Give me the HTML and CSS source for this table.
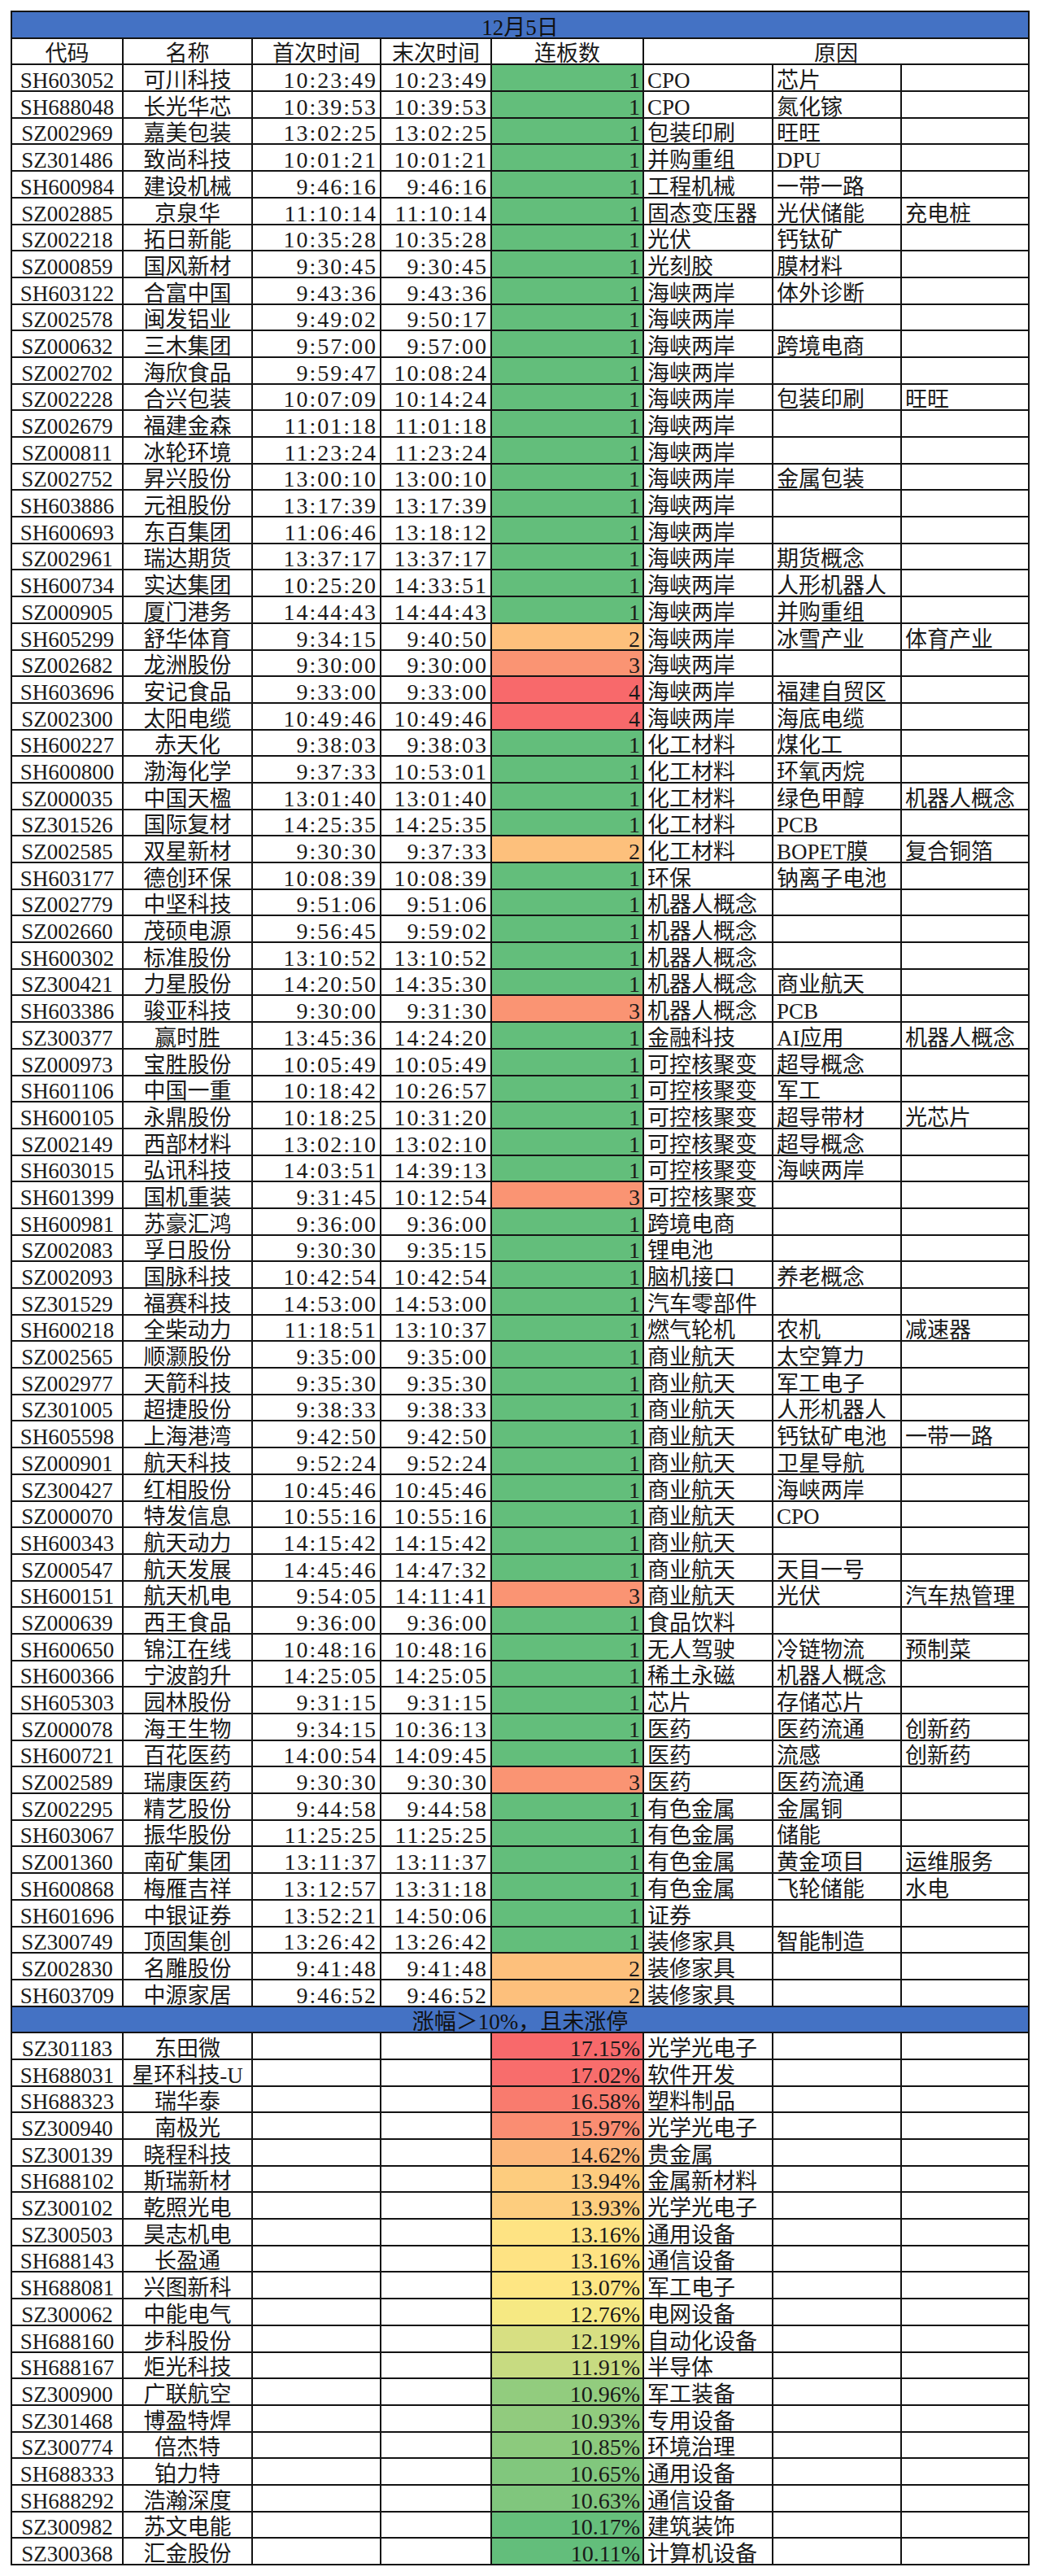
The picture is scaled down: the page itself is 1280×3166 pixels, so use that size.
FILE: index.html
```html
<!DOCTYPE html>
<html lang="zh-CN">
<head>
<meta charset="utf-8">
<title>12月5日</title>
<link rel="stylesheet" href="styles.css">
</head>
<body>
<div class="sheet">
<div class="band">12月5日</div>
<div class="r hd"><div>代码</div><div>名称</div><div>首次时间</div><div>末次时间</div><div>连板数</div><div class="why">原因</div></div>
<div class="r"><div>SH603052</div><div>可川科技</div><div>10:23:49</div><div>10:23:49</div><div class="v1">1</div><div>CPO</div><div>芯片</div><div></div></div>
<div class="r"><div>SH688048</div><div>长光华芯</div><div>10:39:53</div><div>10:39:53</div><div class="v1">1</div><div>CPO</div><div>氮化镓</div><div></div></div>
<div class="r"><div>SZ002969</div><div>嘉美包装</div><div>13:02:25</div><div>13:02:25</div><div class="v1">1</div><div>包装印刷</div><div>旺旺</div><div></div></div>
<div class="r"><div>SZ301486</div><div>致尚科技</div><div>10:01:21</div><div>10:01:21</div><div class="v1">1</div><div>并购重组</div><div>DPU</div><div></div></div>
<div class="r"><div>SH600984</div><div>建设机械</div><div>9:46:16</div><div>9:46:16</div><div class="v1">1</div><div>工程机械</div><div>一带一路</div><div></div></div>
<div class="r"><div>SZ002885</div><div>京泉华</div><div>11:10:14</div><div>11:10:14</div><div class="v1">1</div><div>固态变压器</div><div>光伏储能</div><div>充电桩</div></div>
<div class="r"><div>SZ002218</div><div>拓日新能</div><div>10:35:28</div><div>10:35:28</div><div class="v1">1</div><div>光伏</div><div>钙钛矿</div><div></div></div>
<div class="r"><div>SZ000859</div><div>国风新材</div><div>9:30:45</div><div>9:30:45</div><div class="v1">1</div><div>光刻胶</div><div>膜材料</div><div></div></div>
<div class="r"><div>SH603122</div><div>合富中国</div><div>9:43:36</div><div>9:43:36</div><div class="v1">1</div><div>海峡两岸</div><div>体外诊断</div><div></div></div>
<div class="r"><div>SZ002578</div><div>闽发铝业</div><div>9:49:02</div><div>9:50:17</div><div class="v1">1</div><div>海峡两岸</div><div></div><div></div></div>
<div class="r"><div>SZ000632</div><div>三木集团</div><div>9:57:00</div><div>9:57:00</div><div class="v1">1</div><div>海峡两岸</div><div>跨境电商</div><div></div></div>
<div class="r"><div>SZ002702</div><div>海欣食品</div><div>9:59:47</div><div>10:08:24</div><div class="v1">1</div><div>海峡两岸</div><div></div><div></div></div>
<div class="r"><div>SZ002228</div><div>合兴包装</div><div>10:07:09</div><div>10:14:24</div><div class="v1">1</div><div>海峡两岸</div><div>包装印刷</div><div>旺旺</div></div>
<div class="r"><div>SZ002679</div><div>福建金森</div><div>11:01:18</div><div>11:01:18</div><div class="v1">1</div><div>海峡两岸</div><div></div><div></div></div>
<div class="r"><div>SZ000811</div><div>冰轮环境</div><div>11:23:24</div><div>11:23:24</div><div class="v1">1</div><div>海峡两岸</div><div></div><div></div></div>
<div class="r"><div>SZ002752</div><div>昇兴股份</div><div>13:00:10</div><div>13:00:10</div><div class="v1">1</div><div>海峡两岸</div><div>金属包装</div><div></div></div>
<div class="r"><div>SH603886</div><div>元祖股份</div><div>13:17:39</div><div>13:17:39</div><div class="v1">1</div><div>海峡两岸</div><div></div><div></div></div>
<div class="r"><div>SH600693</div><div>东百集团</div><div>11:06:46</div><div>13:18:12</div><div class="v1">1</div><div>海峡两岸</div><div></div><div></div></div>
<div class="r"><div>SZ002961</div><div>瑞达期货</div><div>13:37:17</div><div>13:37:17</div><div class="v1">1</div><div>海峡两岸</div><div>期货概念</div><div></div></div>
<div class="r"><div>SH600734</div><div>实达集团</div><div>10:25:20</div><div>14:33:51</div><div class="v1">1</div><div>海峡两岸</div><div>人形机器人</div><div></div></div>
<div class="r"><div>SZ000905</div><div>厦门港务</div><div>14:44:43</div><div>14:44:43</div><div class="v1">1</div><div>海峡两岸</div><div>并购重组</div><div></div></div>
<div class="r"><div>SH605299</div><div>舒华体育</div><div>9:34:15</div><div>9:40:50</div><div class="v2">2</div><div>海峡两岸</div><div>冰雪产业</div><div>体育产业</div></div>
<div class="r"><div>SZ002682</div><div>龙洲股份</div><div>9:30:00</div><div>9:30:00</div><div class="v3">3</div><div>海峡两岸</div><div></div><div></div></div>
<div class="r"><div>SH603696</div><div>安记食品</div><div>9:33:00</div><div>9:33:00</div><div class="v4">4</div><div>海峡两岸</div><div>福建自贸区</div><div></div></div>
<div class="r"><div>SZ002300</div><div>太阳电缆</div><div>10:49:46</div><div>10:49:46</div><div class="v4">4</div><div>海峡两岸</div><div>海底电缆</div><div></div></div>
<div class="r"><div>SH600227</div><div>赤天化</div><div>9:38:03</div><div>9:38:03</div><div class="v1">1</div><div>化工材料</div><div>煤化工</div><div></div></div>
<div class="r"><div>SH600800</div><div>渤海化学</div><div>9:37:33</div><div>10:53:01</div><div class="v1">1</div><div>化工材料</div><div>环氧丙烷</div><div></div></div>
<div class="r"><div>SZ000035</div><div>中国天楹</div><div>13:01:40</div><div>13:01:40</div><div class="v1">1</div><div>化工材料</div><div>绿色甲醇</div><div>机器人概念</div></div>
<div class="r"><div>SZ301526</div><div>国际复材</div><div>14:25:35</div><div>14:25:35</div><div class="v1">1</div><div>化工材料</div><div>PCB</div><div></div></div>
<div class="r"><div>SZ002585</div><div>双星新材</div><div>9:30:30</div><div>9:37:33</div><div class="v2">2</div><div>化工材料</div><div>BOPET膜</div><div>复合铜箔</div></div>
<div class="r"><div>SH603177</div><div>德创环保</div><div>10:08:39</div><div>10:08:39</div><div class="v1">1</div><div>环保</div><div>钠离子电池</div><div></div></div>
<div class="r"><div>SZ002779</div><div>中坚科技</div><div>9:51:06</div><div>9:51:06</div><div class="v1">1</div><div>机器人概念</div><div></div><div></div></div>
<div class="r"><div>SZ002660</div><div>茂硕电源</div><div>9:56:45</div><div>9:59:02</div><div class="v1">1</div><div>机器人概念</div><div></div><div></div></div>
<div class="r"><div>SH600302</div><div>标准股份</div><div>13:10:52</div><div>13:10:52</div><div class="v1">1</div><div>机器人概念</div><div></div><div></div></div>
<div class="r"><div>SZ300421</div><div>力星股份</div><div>14:20:50</div><div>14:35:30</div><div class="v1">1</div><div>机器人概念</div><div>商业航天</div><div></div></div>
<div class="r"><div>SH603386</div><div>骏亚科技</div><div>9:30:00</div><div>9:31:30</div><div class="v3">3</div><div>机器人概念</div><div>PCB</div><div></div></div>
<div class="r"><div>SZ300377</div><div>赢时胜</div><div>13:45:36</div><div>14:24:20</div><div class="v1">1</div><div>金融科技</div><div>AI应用</div><div>机器人概念</div></div>
<div class="r"><div>SZ000973</div><div>宝胜股份</div><div>10:05:49</div><div>10:05:49</div><div class="v1">1</div><div>可控核聚变</div><div>超导概念</div><div></div></div>
<div class="r"><div>SH601106</div><div>中国一重</div><div>10:18:42</div><div>10:26:57</div><div class="v1">1</div><div>可控核聚变</div><div>军工</div><div></div></div>
<div class="r"><div>SH600105</div><div>永鼎股份</div><div>10:18:25</div><div>10:31:20</div><div class="v1">1</div><div>可控核聚变</div><div>超导带材</div><div>光芯片</div></div>
<div class="r"><div>SZ002149</div><div>西部材料</div><div>13:02:10</div><div>13:02:10</div><div class="v1">1</div><div>可控核聚变</div><div>超导概念</div><div></div></div>
<div class="r"><div>SH603015</div><div>弘讯科技</div><div>14:03:51</div><div>14:39:13</div><div class="v1">1</div><div>可控核聚变</div><div>海峡两岸</div><div></div></div>
<div class="r"><div>SH601399</div><div>国机重装</div><div>9:31:45</div><div>10:12:54</div><div class="v3">3</div><div>可控核聚变</div><div></div><div></div></div>
<div class="r"><div>SH600981</div><div>苏豪汇鸿</div><div>9:36:00</div><div>9:36:00</div><div class="v1">1</div><div>跨境电商</div><div></div><div></div></div>
<div class="r"><div>SZ002083</div><div>孚日股份</div><div>9:30:30</div><div>9:35:15</div><div class="v1">1</div><div>锂电池</div><div></div><div></div></div>
<div class="r"><div>SZ002093</div><div>国脉科技</div><div>10:42:54</div><div>10:42:54</div><div class="v1">1</div><div>脑机接口</div><div>养老概念</div><div></div></div>
<div class="r"><div>SZ301529</div><div>福赛科技</div><div>14:53:00</div><div>14:53:00</div><div class="v1">1</div><div>汽车零部件</div><div></div><div></div></div>
<div class="r"><div>SH600218</div><div>全柴动力</div><div>11:18:51</div><div>13:10:37</div><div class="v1">1</div><div>燃气轮机</div><div>农机</div><div>减速器</div></div>
<div class="r"><div>SZ002565</div><div>顺灏股份</div><div>9:35:00</div><div>9:35:00</div><div class="v1">1</div><div>商业航天</div><div>太空算力</div><div></div></div>
<div class="r"><div>SZ002977</div><div>天箭科技</div><div>9:35:30</div><div>9:35:30</div><div class="v1">1</div><div>商业航天</div><div>军工电子</div><div></div></div>
<div class="r"><div>SZ301005</div><div>超捷股份</div><div>9:38:33</div><div>9:38:33</div><div class="v1">1</div><div>商业航天</div><div>人形机器人</div><div></div></div>
<div class="r"><div>SH605598</div><div>上海港湾</div><div>9:42:50</div><div>9:42:50</div><div class="v1">1</div><div>商业航天</div><div>钙钛矿电池</div><div>一带一路</div></div>
<div class="r"><div>SZ000901</div><div>航天科技</div><div>9:52:24</div><div>9:52:24</div><div class="v1">1</div><div>商业航天</div><div>卫星导航</div><div></div></div>
<div class="r"><div>SZ300427</div><div>红相股份</div><div>10:45:46</div><div>10:45:46</div><div class="v1">1</div><div>商业航天</div><div>海峡两岸</div><div></div></div>
<div class="r"><div>SZ000070</div><div>特发信息</div><div>10:55:16</div><div>10:55:16</div><div class="v1">1</div><div>商业航天</div><div>CPO</div><div></div></div>
<div class="r"><div>SH600343</div><div>航天动力</div><div>14:15:42</div><div>14:15:42</div><div class="v1">1</div><div>商业航天</div><div></div><div></div></div>
<div class="r"><div>SZ000547</div><div>航天发展</div><div>14:45:46</div><div>14:47:32</div><div class="v1">1</div><div>商业航天</div><div>天目一号</div><div></div></div>
<div class="r"><div>SH600151</div><div>航天机电</div><div>9:54:05</div><div>14:11:41</div><div class="v3">3</div><div>商业航天</div><div>光伏</div><div>汽车热管理</div></div>
<div class="r"><div>SZ000639</div><div>西王食品</div><div>9:36:00</div><div>9:36:00</div><div class="v1">1</div><div>食品饮料</div><div></div><div></div></div>
<div class="r"><div>SH600650</div><div>锦江在线</div><div>10:48:16</div><div>10:48:16</div><div class="v1">1</div><div>无人驾驶</div><div>冷链物流</div><div>预制菜</div></div>
<div class="r"><div>SH600366</div><div>宁波韵升</div><div>14:25:05</div><div>14:25:05</div><div class="v1">1</div><div>稀土永磁</div><div>机器人概念</div><div></div></div>
<div class="r"><div>SH605303</div><div>园林股份</div><div>9:31:15</div><div>9:31:15</div><div class="v1">1</div><div>芯片</div><div>存储芯片</div><div></div></div>
<div class="r"><div>SZ000078</div><div>海王生物</div><div>9:34:15</div><div>10:36:13</div><div class="v1">1</div><div>医药</div><div>医药流通</div><div>创新药</div></div>
<div class="r"><div>SH600721</div><div>百花医药</div><div>14:00:54</div><div>14:09:45</div><div class="v1">1</div><div>医药</div><div>流感</div><div>创新药</div></div>
<div class="r"><div>SZ002589</div><div>瑞康医药</div><div>9:30:30</div><div>9:30:30</div><div class="v3">3</div><div>医药</div><div>医药流通</div><div></div></div>
<div class="r"><div>SZ002295</div><div>精艺股份</div><div>9:44:58</div><div>9:44:58</div><div class="v1">1</div><div>有色金属</div><div>金属铜</div><div></div></div>
<div class="r"><div>SH603067</div><div>振华股份</div><div>11:25:25</div><div>11:25:25</div><div class="v1">1</div><div>有色金属</div><div>储能</div><div></div></div>
<div class="r"><div>SZ001360</div><div>南矿集团</div><div>13:11:37</div><div>13:11:37</div><div class="v1">1</div><div>有色金属</div><div>黄金项目</div><div>运维服务</div></div>
<div class="r"><div>SH600868</div><div>梅雁吉祥</div><div>13:12:57</div><div>13:31:18</div><div class="v1">1</div><div>有色金属</div><div>飞轮储能</div><div>水电</div></div>
<div class="r"><div>SH601696</div><div>中银证券</div><div>13:52:21</div><div>14:50:06</div><div class="v1">1</div><div>证券</div><div></div><div></div></div>
<div class="r"><div>SZ300749</div><div>顶固集创</div><div>13:26:42</div><div>13:26:42</div><div class="v1">1</div><div>装修家具</div><div>智能制造</div><div></div></div>
<div class="r"><div>SZ002830</div><div>名雕股份</div><div>9:41:48</div><div>9:41:48</div><div class="v2">2</div><div>装修家具</div><div></div><div></div></div>
<div class="r"><div>SH603709</div><div>中源家居</div><div>9:46:52</div><div>9:46:52</div><div class="v2">2</div><div>装修家具</div><div></div><div></div></div>
<div class="band">涨幅＞10%，且未涨停</div>
<div class="r"><div>SZ301183</div><div>东田微</div><div></div><div></div><div style="background:#F8696B">17.15%</div><div>光学光电子</div><div></div><div></div></div>
<div class="r"><div>SH688031</div><div>星环科技-U</div><div></div><div></div><div style="background:#F86D6C">17.02%</div><div>软件开发</div><div></div><div></div></div>
<div class="r"><div>SH688323</div><div>瑞华泰</div><div></div><div></div><div style="background:#F97B6E">16.58%</div><div>塑料制品</div><div></div><div></div></div>
<div class="r"><div>SZ300940</div><div>南极光</div><div></div><div></div><div style="background:#FA8D72">15.97%</div><div>光学光电子</div><div></div><div></div></div>
<div class="r"><div>SZ300139</div><div>晓程科技</div><div></div><div></div><div style="background:#FCB77A">14.62%</div><div>贵金属</div><div></div><div></div></div>
<div class="r"><div>SH688102</div><div>斯瑞新材</div><div></div><div></div><div style="background:#FDCC7E">13.94%</div><div>金属新材料</div><div></div><div></div></div>
<div class="r"><div>SZ300102</div><div>乾照光电</div><div></div><div></div><div style="background:#FDCD7E">13.93%</div><div>光学光电子</div><div></div><div></div></div>
<div class="r"><div>SZ300503</div><div>昊志机电</div><div></div><div></div><div style="background:#FEE383">13.16%</div><div>通用设备</div><div></div><div></div></div>
<div class="r"><div>SH688143</div><div>长盈通</div><div></div><div></div><div style="background:#FEE383">13.16%</div><div>通信设备</div><div></div><div></div></div>
<div class="r"><div>SH688081</div><div>兴图新科</div><div></div><div></div><div style="background:#FEE683">13.07%</div><div>军工电子</div><div></div><div></div></div>
<div class="r"><div>SZ300062</div><div>中能电气</div><div></div><div></div><div style="background:#F6E983">12.76%</div><div>电网设备</div><div></div><div></div></div>
<div class="r"><div>SH688160</div><div>步科股份</div><div></div><div></div><div style="background:#D7DF82">12.19%</div><div>自动化设备</div><div></div><div></div></div>
<div class="r"><div>SH688167</div><div>炬光科技</div><div></div><div></div><div style="background:#C7DB81">11.91%</div><div>半导体</div><div></div><div></div></div>
<div class="r"><div>SZ300900</div><div>广联航空</div><div></div><div></div><div style="background:#92CC7E">10.96%</div><div>军工装备</div><div></div><div></div></div>
<div class="r"><div>SZ301468</div><div>博盈特焊</div><div></div><div></div><div style="background:#91CB7E">10.93%</div><div>专用设备</div><div></div><div></div></div>
<div class="r"><div>SZ300774</div><div>倍杰特</div><div></div><div></div><div style="background:#8CCA7D">10.85%</div><div>环境治理</div><div></div><div></div></div>
<div class="r"><div>SH688333</div><div>铂力特</div><div></div><div></div><div style="background:#81C77D">10.65%</div><div>通用设备</div><div></div><div></div></div>
<div class="r"><div>SH688292</div><div>浩瀚深度</div><div></div><div></div><div style="background:#80C67D">10.63%</div><div>通信设备</div><div></div><div></div></div>
<div class="r"><div>SZ300982</div><div>苏文电能</div><div></div><div></div><div style="background:#66BF7B">10.17%</div><div>建筑装饰</div><div></div><div></div></div>
<div class="r"><div>SZ300368</div><div>汇金股份</div><div></div><div></div><div style="background:#63BE7B">10.11%</div><div>计算机设备</div><div></div><div></div></div>
</div>
</body>
</html>
```

FILE: styles.css
```css
html, body {
  margin: 0;
  padding: 0;
  background: #ffffff;
}

body {
  font-family: "Liberation Serif", "Noto Sans CJK SC", serif;
  color: #1a1a1a;
}

.sheet {
  display: grid;
  grid-template-columns: 137px 159px 158px 136px 187px 159px 158px 157px;
  grid-auto-rows: 32.69px;
  width: max-content;
  margin: 13px 0 0 13px;
  border-left: 2px solid #141414;
  border-top: 2px solid #141414;
}

.r {
  display: contents;
}

.r > div,
.band {
  box-sizing: border-box;
  border-right: 2px solid #141414;
  border-bottom: 2px solid #141414;
  display: flex;
  align-items: flex-end;
  white-space: nowrap;
  overflow: hidden;
  font-size: 27px;
  line-height: 24px;
  padding: 0 4px;
}

.band {
  grid-column: 1 / -1;
  justify-content: center;
  background: #4472c4;
  color: #111111;
}

.r > div:nth-child(1),
.r > div:nth-child(2) {
  justify-content: center;
}

.r > div:nth-child(3),
.r > div:nth-child(4) {
  justify-content: flex-end;
  font-size: 28px;
  letter-spacing: 2px;
  padding-right: 3px;
}

.r > div:nth-child(5) {
  justify-content: flex-end;
  font-size: 28px;
  padding-right: 3px;
}

.hd > div,
.hd > div:nth-child(3),
.hd > div:nth-child(4),
.hd > div:nth-child(5) {
  justify-content: center;
  font-size: 27px;
  letter-spacing: 0;
  padding: 0 4px;
}

.hd > .why {
  grid-column: span 3;
}

.v1 { background: #63be7b; }
.v2 { background: #fdc07c; }
.v3 { background: #fa9473; }
.v4 { background: #f8696b; }
```
